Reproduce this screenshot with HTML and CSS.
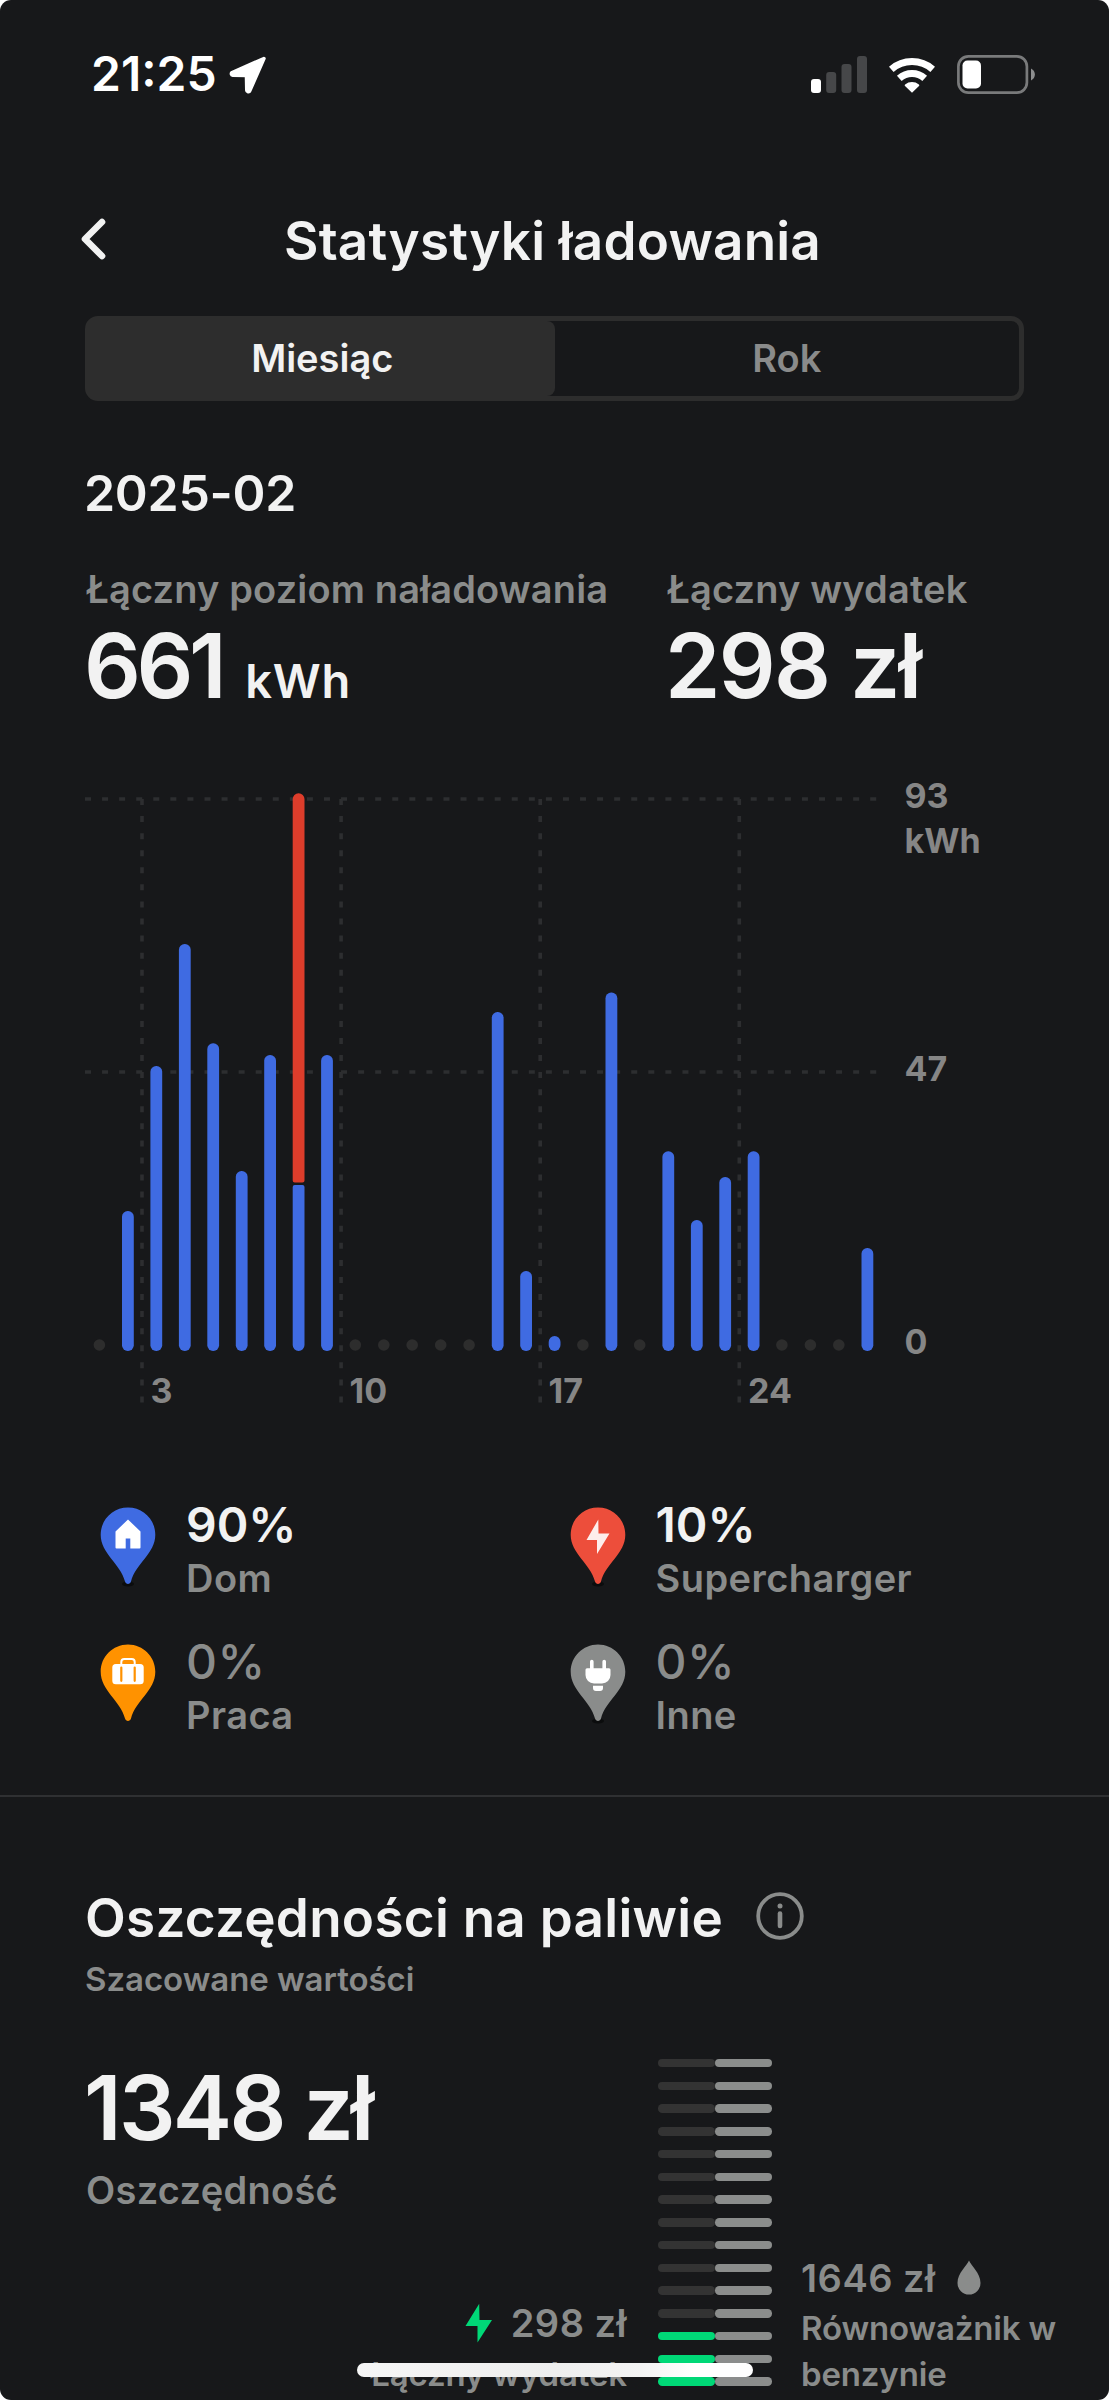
FILE: index.html
```html
<!DOCTYPE html>
<html lang="pl">
<head>
<meta charset="utf-8">
<title>Statystyki ładowania</title>
<link rel="stylesheet" href="styles.css">
</head>
<body>
<div class="screen">
  <header class="status">
    <span class="time">21:25</span>
    <svg class="location" width="41" height="40" viewBox="0 0 40 40"><path d="M36.400 3.600 4.600 17.600a1.4 1.4 0 0 0 .6 2.6L19 20.400 19.300 35.200a1.500 1.500 0 0 0 2.900.6Z" fill="#fff" stroke="#fff" stroke-width="3.600" stroke-linejoin="round"/></svg>
    <svg class="signal" width="56" height="38" viewBox="0 0 56 38"><rect x="0" y="23" width="10" height="14" rx="3" fill="#fff"/><g fill="#464749"><rect x="15.200" y="16" width="10" height="21" rx="3"/><rect x="30.500" y="8" width="10" height="29" rx="3"/><rect x="46" y="0" width="10" height="37" rx="3"/></g></svg>
    <svg class="wifi" width="50" height="38" viewBox="0 0 50 38" fill="none" stroke="#fff"><path d="M3.300 13.300A31.500 31.500 0 0 1 44.700 13.300" stroke-width="7"/><path d="M11.300 22.300A19 19 0 0 1 36.700 22.300" stroke-width="7"/><path d="M24 36.800 17 29.900a1 1 0 0 1 .1-1.500 11 11 0 0 1 13.800 0 1 1 0 0 1 .1 1.500Z" fill="#fff" stroke="none"/></svg>
    <svg class="battery" width="78" height="40" viewBox="0 0 78 40"><rect x="1.400" y="1.400" width="68.500" height="36.200" rx="10" fill="none" stroke="#797a7b" stroke-width="2.700"/><rect x="5.500" y="5.500" width="18.500" height="28" rx="5" fill="#fff"/><path d="M74 13.500c5.200 2.500 5.200 9.500 0 12Z" fill="#8c8d8e"/></svg>
  </header>

  <nav class="titlebar">
    <svg class="back" width="26" height="42" viewBox="0 0 26 42"><path d="M22 4 5 21 22 38" fill="none" stroke="#f2f2f2" stroke-width="6.600" stroke-linecap="round" stroke-linejoin="round"/></svg>
    <h1 class="title">Statystyki ładowania</h1>
  </nav>

  <div class="tabs">
    <div class="tab tab-active">Miesiąc</div>
    <div class="tab">Rok</div>
  </div>

  <div class="period">2025-02</div>

  <section class="totals">
    <div>
      <div class="label">Łączny poziom naładowania</div>
      <div class="value"><span class="energy">661</span><span class="unit">kWh</span></div>
    </div>
    <div>
      <div class="label label-cost">Łączny wydatek</div>
      <div class="value cost">298 zł</div>
    </div>
  </section>

  <svg class="chart" width="1024" height="660" viewBox="85 760 1024 660">
    <g class="grid">
      <path d="M85 799H879"/><path d="M85 1072H879"/>
      <path d="M142 799V1404"/><path d="M341.100 799V1404"/><path d="M540.200 799V1404"/><path d="M739.300 799V1404"/>
    </g>
    <g class="empty">
      <circle cx="99.400" cy="1345" r="5.800"/><circle cx="355.300" cy="1345" r="5.800"/><circle cx="383.800" cy="1345" r="5.800"/><circle cx="412.200" cy="1345" r="5.800"/><circle cx="440.700" cy="1345" r="5.800"/><circle cx="469.100" cy="1345" r="5.800"/><circle cx="582.900" cy="1345" r="5.800"/><circle cx="639.700" cy="1345" r="5.800"/><circle cx="781.900" cy="1345" r="5.800"/><circle cx="810.400" cy="1345" r="5.800"/><circle cx="838.800" cy="1345" r="5.800"/>
    </g>
    <g class="home">
      <rect x="122" y="1211" width="11.800" height="140" rx="5.700"/>
      <rect x="150.400" y="1066" width="11.800" height="285" rx="5.700"/>
      <rect x="178.900" y="944" width="11.800" height="407" rx="5.700"/>
      <rect x="207.300" y="1043.300" width="11.800" height="307.700" rx="5.700"/>
      <rect x="235.800" y="1171" width="11.800" height="180" rx="5.700"/>
      <rect x="264.200" y="1055" width="11.800" height="296" rx="5.700"/>
      <path d="M292.700 1187a2 2 0 0 1 2-2h7.800a2 2 0 0 1 2 2v158.100a5.900 5.900 0 0 1-11.800 0Z"/>
      <rect x="321.100" y="1055" width="11.800" height="296" rx="5.700"/>
      <rect x="491.800" y="1012" width="11.800" height="339" rx="5.700"/>
      <rect x="520.200" y="1271" width="11.800" height="80" rx="5.700"/>
      <rect x="548.700" y="1336" width="11.800" height="15" rx="5.900"/>
      <rect x="605.500" y="992.500" width="11.800" height="358.500" rx="5.700"/>
      <rect x="662.400" y="1151.300" width="11.800" height="199.700" rx="5.700"/>
      <rect x="690.900" y="1220" width="11.800" height="131" rx="5.700"/>
      <rect x="719.300" y="1177" width="11.800" height="174" rx="5.700"/>
      <rect x="747.700" y="1151.300" width="11.800" height="199.700" rx="5.700"/>
      <rect x="861.500" y="1248" width="11.800" height="103" rx="5.700"/>
    </g>
    <path class="supercharger" d="M292.700 1180.500a2 2 0 0 0 2 2h7.800a2 2 0 0 0 2-2V799.100a5.900 5.900 0 0 0-11.800 0Z"/>
    <g class="axis">
      <text x="904.500" y="807.700">93</text><text x="904.500" y="852.800">kWh</text><text x="904.500" y="1081">47</text><text x="904.500" y="1354">0</text>
      <text x="150.500" y="1402.800">3</text><text x="349.500" y="1402.800">10</text><text x="548.500" y="1402.800">17</text><text x="748" y="1402.800">24</text>
    </g>
  </svg>

  <section class="legend">
    <div class="entry">
      <svg class="pin" width="56" height="82" viewBox="0 0 56 82"><ellipse cx="28" cy="77" rx="6" ry="2.500" fill="#0b0c0d"/><path d="M28 .5C12.800.5.700 12.600.700 27.800c0 18.700 19.600 28.800 24.300 46.700.8 3.200 5.200 3.200 6 0 4.700-17.900 24.300-28 24.300-46.700C55.300 12.600 43.200.5 28 .5Z" fill="#3f6be2"/><path d="M28 12.500 15.500 24.500V40.500a1 1 0 0 0 1 1H25.700V31.500H30.300V41.500H39.500a1 1 0 0 0 1-1V24.500Z" fill="#fff"/></svg>
      <div><div class="share">90%</div><div class="place">Dom</div></div>
    </div>
    <div class="entry">
      <svg class="pin" width="56" height="82" viewBox="0 0 56 82"><ellipse cx="28" cy="77" rx="6" ry="2.500" fill="#0b0c0d"/><path d="M28 .5C12.800.5.700 12.600.700 27.800c0 18.700 19.600 28.800 24.300 46.700.8 3.200 5.200 3.200 6 0 4.700-17.900 24.300-28 24.300-46.700C55.300 12.600 43.200.5 28 .5Z" fill="#ed4e3b"/><path d="M28.300 12.500 16.500 33H27V47L39.500 26.500H28.500Z" fill="#fdeeec"/></svg>
      <div><div class="share">10%</div><div class="place">Supercharger</div></div>
    </div>
    <div class="entry none">
      <svg class="pin" width="56" height="82" viewBox="0 0 56 82"><path d="M28 .5C12.800.5.700 12.600.700 27.800c0 18.700 19.600 28.800 24.300 46.700.8 3.200 5.200 3.200 6 0 4.700-17.900 24.300-28 24.300-46.700C55.300 12.600 43.200.5 28 .5Z" fill="#ff9200"/><path d="M21.300 21V18a3 3 0 0 1 3-3h7.400a3 3 0 0 1 3 3v3" fill="none" stroke="#fff" stroke-width="2"/><rect x="12.300" y="20" width="31.400" height="20.200" rx="3.500" fill="#fff"/><path d="M21.300 23.500V36.800M34.700 23.500V36.800" stroke="#ff9200" stroke-width="2.200" stroke-linecap="round"/></svg>
      <div><div class="share">0%</div><div class="place">Praca</div></div>
    </div>
    <div class="entry none">
      <svg class="pin" width="56" height="82" viewBox="0 0 56 82"><ellipse cx="28" cy="77" rx="6" ry="2.500" fill="#0b0c0d"/><path d="M28 .5C12.800.5.700 12.600.700 27.800c0 18.700 19.600 28.800 24.300 46.700.8 3.200 5.200 3.200 6 0 4.700-17.900 24.300-28 24.300-46.700C55.300 12.600 43.200.5 28 .5Z" fill="#8a8c8b"/><path d="M21.800 17.500V26M34.200 17.500V26" stroke="#fff" stroke-width="3.600" stroke-linecap="round"/><path d="M17 24.300H39a1.500 1.500 0 0 1 1.500 1.500V31a8.500 8.500 0 0 1-8.500 8.500H24A8.500 8.500 0 0 1 15.500 31V25.800A1.500 1.500 0 0 1 17 24.300ZM23 41.700H33V44a3 3 0 0 1-3 3H26a3 3 0 0 1-3-3Z" fill="#fff"/></svg>
      <div><div class="share">0%</div><div class="place">Inne</div></div>
    </div>
  </section>

  <section class="savings">
    <div class="heading">
      <h2 class="savings-title">Oszczędności na paliwie</h2>
      <svg width="50" height="50" viewBox="0 0 50 50"><circle cx="25" cy="25" r="21.800" fill="none" stroke="#8a8c8b" stroke-width="3.800"/><circle cx="25" cy="15" r="2.500" fill="#8a8c8b"/><path d="M25 22.500V35" stroke="#8a8c8b" stroke-width="4.600" stroke-linecap="round"/></svg>
    </div>
    <div class="estimate">Szacowane wartości</div>
    <div class="compare">
      <div class="left">
        <div class="value saved">1348 zł</div>
        <div class="label label-saved">Oszczędność</div>
        <div class="amount electric"><svg width="28" height="40" viewBox="0 0 28 40"><path d="M14.200.8.500 23H12.500V39.500L27 17H14.500Z" fill="#00d877"/></svg><span>298 zł</span></div>
        <div class="note note-electric">Łączny wydatek</div>
      </div>
      <div class="meter">
        <i></i><i></i><i></i><i></i><i></i><i></i><i></i><i></i><i></i><i></i><i></i><i></i><i></i><i></i><i></i><i></i><i></i><i></i><i></i><i></i><i></i><i></i><i></i><i></i><i class="used"></i><i></i><i class="used"></i><i></i><i class="used"></i><i></i>
      </div>
      <div class="right">
        <div class="amount fuel"><span>1646 zł</span><svg width="24" height="36" viewBox="0 0 24 36"><path d="M12 .5C10 5.500.5 13 .5 23a11.500 11.500 0 0 0 23 0C23.500 13 14 5.500 12 .5Z" fill="#8a8c8b"/></svg></div>
        <div class="note note-fuel">Równoważnik w<br>benzynie</div>
      </div>
    </div>
  </section>
  <div class="home-indicator"></div>
</div>
</body>
</html>
```

FILE: styles.css
```css
* { box-sizing: border-box; }
body { margin: 0; background: #fff; font-family: Inter, "Liberation Sans", sans-serif; }
svg { display: block; flex: none; }

.screen {
  position: relative;
  width: 1109px;
  height: 2400px;
  overflow: hidden;
  border-radius: 11px;
  background: #17181a;
  color: #f2f2f2;
  display: flex;
  flex-direction: column;
}
.screen > * { flex: none; }

.status { height: 176px; padding: 44px 74px 0 91px; display: flex; align-items: flex-start; color: #fff; }
.time { width: 136px; font-size: 48px; line-height: 60px; font-weight: 600; }
.location { margin-top: 10.500px; }
.signal { margin: 12px 21px 0 auto; }
.wifi { margin: 11.500px 19px 0 0; }
.battery { margin-top: 11px; }

.titlebar { height: 139.5px; padding: 32.700px 80px 0; display: flex; align-items: flex-start; }
.back { margin-top: 9.500px; }
.title { flex: 1; margin: 0 30px 0 0; text-align: center; font-size: 53px; line-height: 64px; font-weight: 600; letter-spacing: .2px; }

.tabs { margin: 0 85px; height: 85px; border: 5.500px solid #2d2d2d; border-radius: 13px; display: flex; }
.tab { flex: 1; text-align: center; font-size: 38px; line-height: 74px; font-weight: 600; color: #8a8b8b; }
.tab-active { background: #2d2d2d; color: #f2f2f2; border-radius: 0 8px 8px 0; }

.period { margin: 62.300px 84px 0; font-size: 50px; line-height: 60px; font-weight: 600; letter-spacing: -.3px; }

.totals { margin: 43.700px 0 0 86px; display: grid; grid-template-columns: 581px 1fr; }
.label { font-size: 38px; line-height: 46px; font-weight: 600; color: #8a8c8b; white-space: nowrap; letter-spacing: .15px; }
.value { height: 99px; margin: 4px 0 0 -2px; font-size: 89px; line-height: 100px; font-weight: 600; white-space: nowrap; letter-spacing: -1.700px; }
.energy { letter-spacing: -4.400px; }
.unit { margin-left: 23px; font-size: 47px; line-height: 1; font-weight: 600; letter-spacing: .7px; }

.chart { margin: 44.500px 0 0 85px; }
.grid path { fill: none; stroke: #2d2e30; stroke-width: 3.600; stroke-dasharray: 6 11.070; }
.empty { fill: #2d2d2d; }
.home { fill: #3f6be2; }
.supercharger { fill: #dd3d2b; }
.axis { fill: #868686; font-size: 34px; font-weight: 700; }

.legend { margin: 77.300px 85px 0; display: grid; grid-template-columns: 1fr 1fr; grid-auto-rows: 136.600px; }
.entry { display: flex; align-items: flex-start; }
.pin { margin: 10px 30px 0 15px; }
.share { font-size: 48px; line-height: 56px; font-weight: 600; letter-spacing: 0; }
.place { margin-top: 2px; font-size: 38px; line-height: 46px; font-weight: 600; letter-spacing: .45px; color: #8a8c8b; }
.none .share { color: #8a8c8b; font-weight: 500; letter-spacing: .5px; }

.savings { margin-top: 24.300px; border-top: 2.500px solid #2f3032; padding: 89.500px 0 0 85px; }
.heading { display: flex; align-items: flex-start; height: 73px; }
.savings-title { margin: 0; width: 669.500px; font-size: 53px; line-height: 64px; font-weight: 600; white-space: nowrap; letter-spacing: .27px; }
.heading svg { margin-top: 5px; }
.estimate { font-size: 33px; line-height: 40px; font-weight: 600; color: #8a8c8b; letter-spacing: -.05px; }
.compare { display: grid; grid-template-columns: 573px 114px 1fr; height: 401px; align-items: start; }
.left { display: flex; flex-direction: column; padding: 54.500px 31px 0 0; }
.saved { margin-left: -1px; letter-spacing: -2.700px; }
.label-saved { margin: 10px 0 0 1px; letter-spacing: .3px; }
.amount { display: flex; font-size: 38px; line-height: 46px; font-weight: 600; color: #8a8c8b; letter-spacing: .5px; }
.electric { margin-top: 87.500px; justify-content: flex-end; gap: 18px; }
.electric svg { margin-top: 2.500px; }
.note { font-size: 33px; color: #8a8c8b; font-weight: 600; white-space: nowrap; letter-spacing: -.15px; }
.note-electric { margin-top: 8px; line-height: 40px; text-align: right; }
.meter { padding-top: 59.500px; display: grid; grid-template-columns: 57px 57px; row-gap: 14.270px; }
.meter i { height: 8.500px; border-radius: 4.250px; background: #333; }
.meter i:nth-child(even) { background: #8b8d8c; }
.meter .used { background: #00d877; }
.right { padding: 255.500px 0 0 29px; }
.fuel { gap: 21px; }
.fuel svg { margin-top: 5px; }
.note-fuel { margin-top: 5.500px; line-height: 45.500px; }

.home-indicator { position: absolute; left: 357px; top: 2363px; width: 396px; height: 14px; border-radius: 7px; background: linear-gradient(90deg, #f6f6f6 0%, #eee 50%, #f4f4f4 72%, #fff 85%); }
```
